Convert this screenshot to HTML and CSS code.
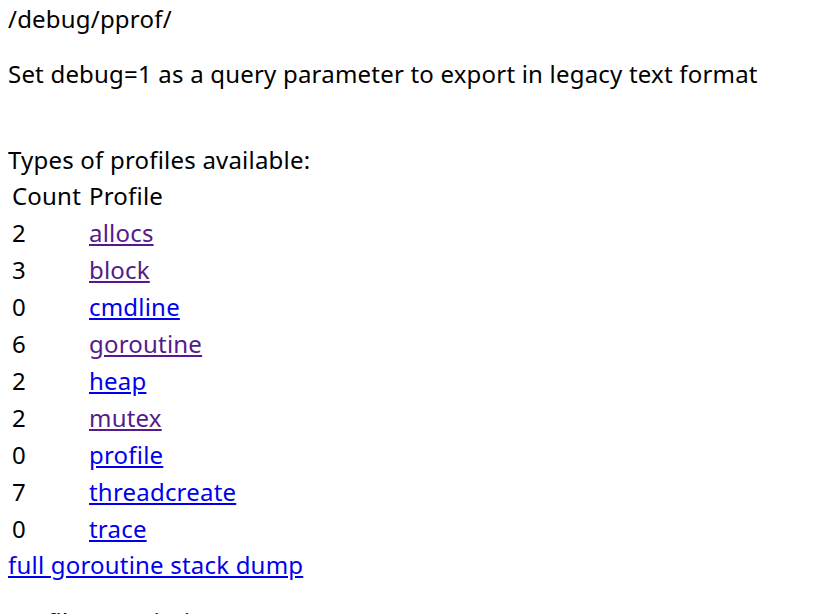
FILE: index.html
```html
<!DOCTYPE html>
<html>
<head>
<meta charset="utf-8">
<title>/debug/pprof/</title>
<link rel="stylesheet" href="styles.css">
</head>
<body>
<div class="line">/debug/pprof/</div>
<p class="hint">Set debug=1 as a query parameter to export in legacy text format</p>
<div class="line blank"></div>
<div class="line">Types of profiles available:</div>
<table class="profiles">
<thead><tr><td class="count">Count</td><td>Profile</td></tr></thead>
<tbody>
<tr><td class="count">2</td><td><a class="visited" href="#">allocs</a></td></tr>
<tr><td class="count">3</td><td><a class="visited" href="#">block</a></td></tr>
<tr><td class="count">0</td><td><a href="#">cmdline</a></td></tr>
<tr><td class="count">6</td><td><a class="visited" href="#">goroutine</a></td></tr>
<tr><td class="count">2</td><td><a href="#">heap</a></td></tr>
<tr><td class="count">2</td><td><a class="visited" href="#">mutex</a></td></tr>
<tr><td class="count">0</td><td><a href="#">profile</a></td></tr>
<tr><td class="count">7</td><td><a href="#">threadcreate</a></td></tr>
<tr><td class="count">0</td><td><a href="#">trace</a></td></tr>
</tbody>
</table>
<a href="#">full goroutine stack dump</a>
<p class="desc">Profile Descriptions:</p>
<ul class="desc-list">
<li><div class="profile-name">allocs:</div> A sampling of past memory allocations</li>
<li><div class="profile-name">block:</div> Stack traces that led to blocking on synchronization primitives</li>
</ul>
</body>
</html>
```
FILE: styles.css
```css
html, body {
  background: #fff;
}
body {
  margin: 2px 8px 8px;
  font-family: "Noto Sans", "Open Sans", sans-serif;
  font-size: 24px;
  line-height: 33px;
  letter-spacing: 0.2px;
  color: #000;
}
a {
  color: #0000ee;
  text-decoration: underline;
}
a.visited {
  color: #551a8b;
}
.blank {
  height: 33px;
}
.hint {
  margin: 22px 0 20px;
}
.profiles {
  border-spacing: 2px;
  border-collapse: separate;
}
.profiles td {
  padding: 1px;
}
.profiles td.count {
  width: 73px;
  padding-left: 2px;
}
.desc {
  margin: 24px 0;
}
.profile-name {
  display: inline-block;
  width: 6rem;
}
```
